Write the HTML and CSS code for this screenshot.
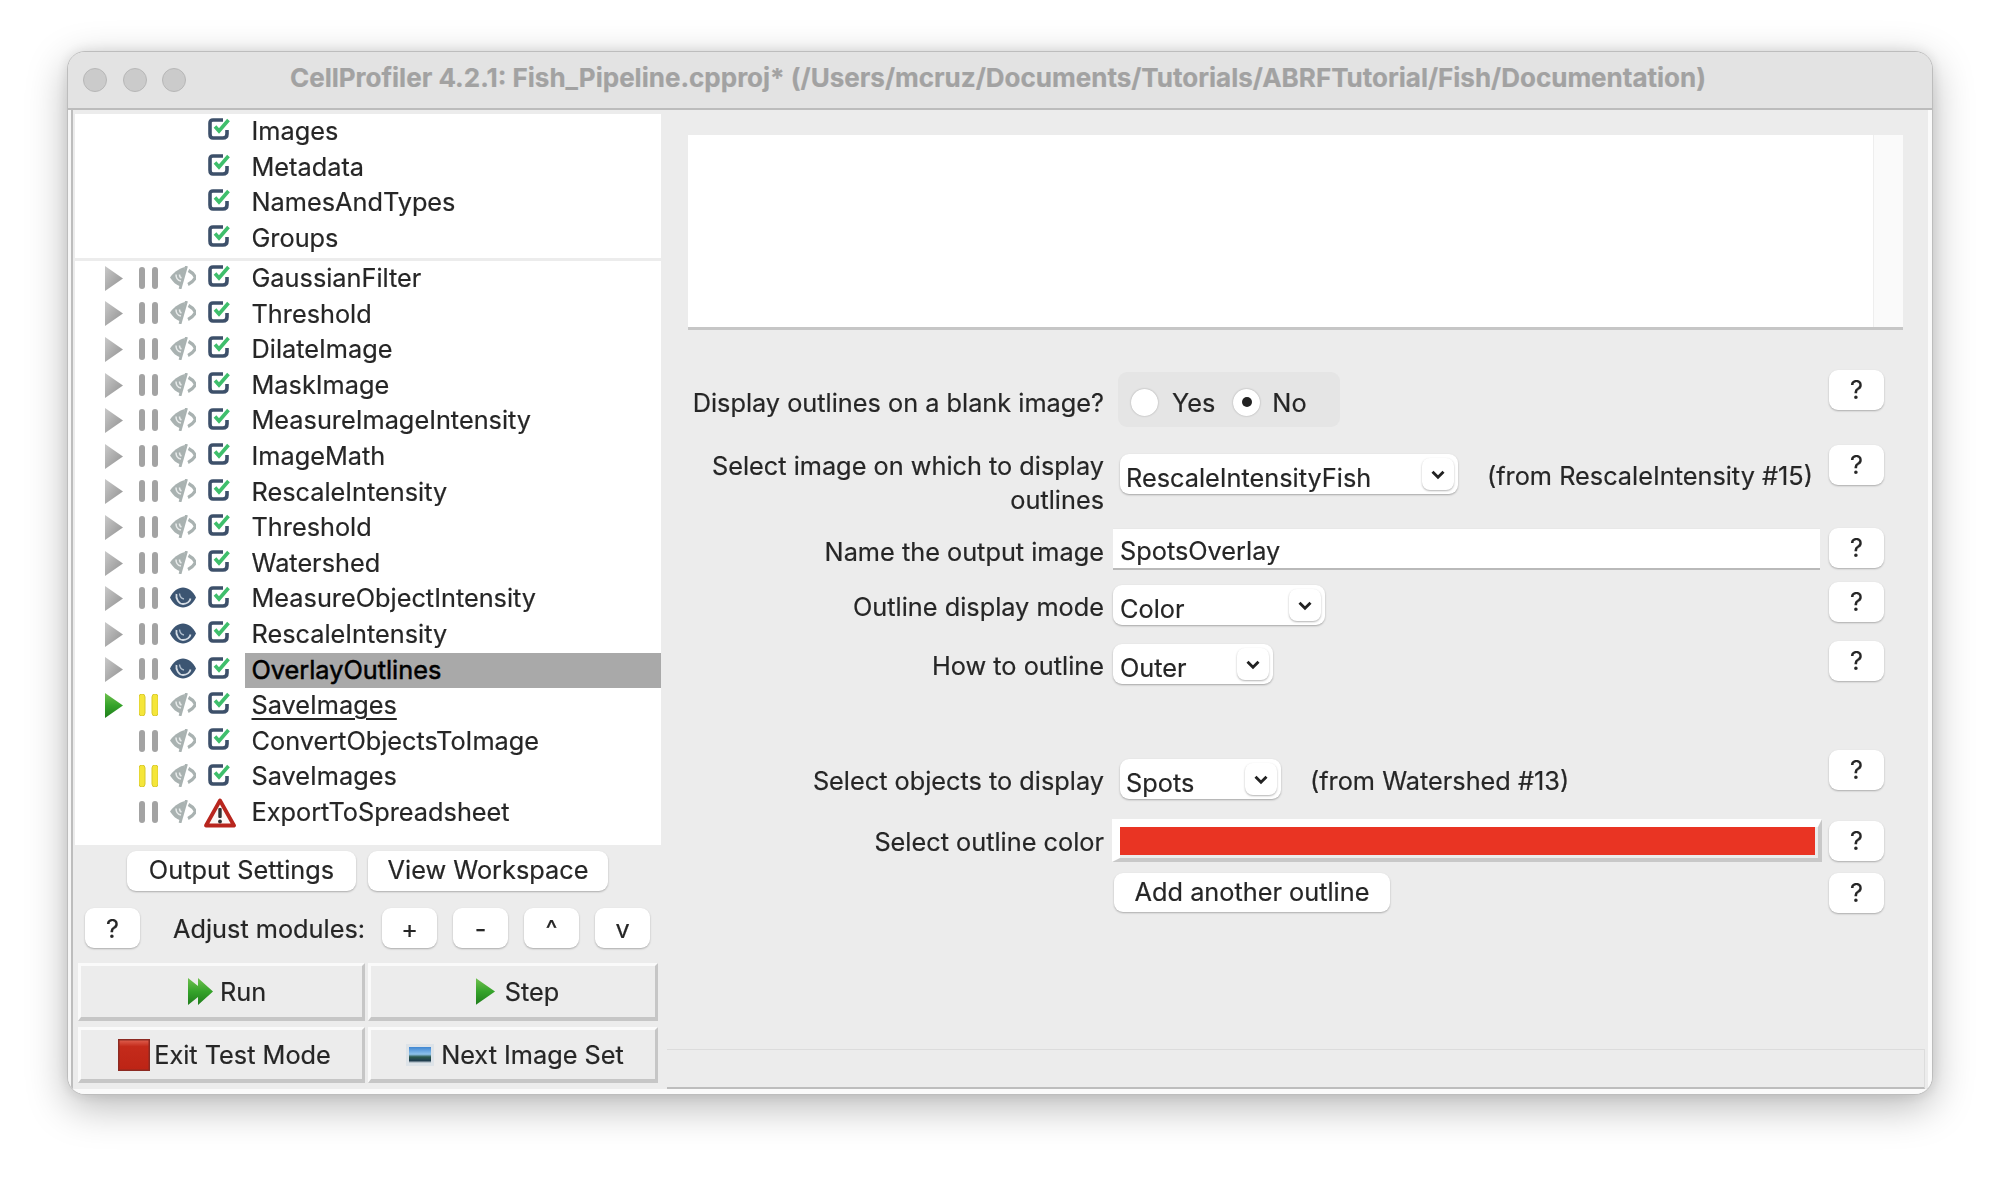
FILE: index.html
```html
<!doctype html>
<html lang="en">
<head>
	<meta charset="utf-8">
	<title>CellProfiler</title>
	<link rel="stylesheet" href="styles.css">
</head>
<body>
	<svg class="defs" width="0" height="0">
		<defs>
			<linearGradient id="gGrey" x1="0" y1="0" x2="1" y2="1"><stop offset="0" stop-color="#c9c9c9"/><stop offset="1" stop-color="#8f8f8f"/></linearGradient>
			<linearGradient id="gGreen" x1="0" y1="0" x2="0" y2="1"><stop offset="0" stop-color="#6fc04f"/><stop offset=".5" stop-color="#35a32a"/><stop offset="1" stop-color="#1f7d1c"/></linearGradient>
			<linearGradient id="gRed" x1="0" y1="0" x2="0" y2="1"><stop offset="0" stop-color="#e0604f"/><stop offset=".22" stop-color="#c42b1b"/><stop offset="1" stop-color="#bd2415"/></linearGradient>
			<linearGradient id="gPhoto" x1="0" y1="0" x2="0" y2="1"><stop offset="0" stop-color="#3f86d2"/><stop offset=".45" stop-color="#8ec2ea"/><stop offset=".62" stop-color="#2c5a4c"/><stop offset=".85" stop-color="#1f3d4e"/><stop offset="1" stop-color="#dfe7ee"/></linearGradient>
			<symbol id="i-arrow" viewBox="0 0 18 25"><path d="M0 0 18 12.5 0 25Z" fill="url(#gGrey)"/></symbol>
			<symbol id="i-arrow-go" viewBox="0 0 18 25"><path d="M0 0 18 12.5 0 25Z" fill="url(#gGreen)"/></symbol>
			<symbol id="i-pause" viewBox="0 0 19 22"><rect x="0" y="0" width="6" height="22" rx="3" fill="#a3a3a3"/><rect x="13" y="0" width="6" height="22" rx="3" fill="#a3a3a3"/></symbol>
			<symbol id="i-pause-on" viewBox="0 0 19 22"><rect x="0" y="0" width="6" height="22" rx="3" fill="#f5e63a" stroke="#d8c92c"/><rect x="13" y="0" width="6" height="22" rx="3" fill="#f5e63a" stroke="#d8c92c"/></symbol>
			<symbol id="i-eye" viewBox="0 0 26 23">
				<path d="M0 11.500C3 5 8 1.500 13 1.500S23 5 26 11.500C23 18 18 21.500 13 21.500S3 18 0 11.500Z" fill="#3c5572"/>
				<path d="M6.500 8c-1 5 2.500 10 6.500 10s7-2.500 7.500-5.500" fill="none" stroke="#d5dde5" stroke-width="1.800"/>
				<path d="M9.500 7.500c.300 3 2 5 4.500 5.500" fill="none" stroke="#aebccb" stroke-width="1.400"/>
			</symbol>
			<symbol id="i-eye-off" viewBox="0 0 26 23">
				<path d="M15 1C8 3 3 7 0 11.500 3 16 6 19 10.500 20.500Z" fill="#a9b2b1"/>
				<path d="M16.500 0 10 23" stroke="#a9b2b1" stroke-width="2.800"/>
				<path d="M18.500 4.500c3 1.500 5.500 4 7 7-1.500 3-4 5.500-7.500 7" fill="none" stroke="#a9b2b1" stroke-width="3.200"/>
				<path d="M6 8.500c0 3.500 2 6 5 6.500M9.500 8.500c0 2 .500 3 2 3.500" fill="none" stroke="#e8ebeb" stroke-width="1.500"/>
			</symbol>
			<symbol id="i-check" viewBox="0 0 23 22">
				<path d="M15 2H5Q2 2 2 5V16Q2 20 5 20H15Q19 20 19 16V12" fill="none" stroke="#3d506a" stroke-width="3.600"/>
				<path d="M7 8.500 11 13 20.500 2" fill="none" stroke="#3fbf6c" stroke-width="3.600"/>
			</symbol>
			<symbol id="i-warn" viewBox="0 0 32 30">
				<path d="M16 2.500 30 27.500H2Z" fill="#fbf7f5" stroke="#b8261e" stroke-width="3.800" stroke-linejoin="round"/>
				<rect x="14.300" y="10" width="3.400" height="10" rx="1" fill="#333"/>
				<circle cx="16" cy="23.500" r="1.900" fill="#333"/>
			</symbol>
			<symbol id="i-chev" viewBox="0 0 14 10"><path d="M2 2.500 7 7.500 12 2.500" fill="none" stroke="#222" stroke-width="2.600"/></symbol>
			<symbol id="i-run" viewBox="0 0 25 27"><path d="M0 0 10 8V0L25 13.500 10 27V19L0 27Z" fill="url(#gGreen)"/></symbol>
			<symbol id="i-stop" viewBox="0 0 32 32"><rect x=".75" y=".75" width="30.500" height="30.500" fill="url(#gRed)" stroke="#8c2a22" stroke-width="1.500"/></symbol>
			<symbol id="i-photo" viewBox="0 0 28 22"><rect width="28" height="22" fill="#dde3e8"/><rect x="3" y="3" width="22" height="16" fill="url(#gPhoto)"/></symbol>
		</defs>
	</svg>

	<div class="window">
		<div class="titlebar">
			<div class="lights"><span class="light"></span><span class="light"></span><span class="light"></span></div>
			<div class="title">CellProfiler 4.2.1: Fish_Pipeline.cpproj* (/Users/mcruz/Documents/Tutorials/ABRFTutorial/Fish/Documentation)</div>
		</div>

		<div class="main">
			<div class="left">
				<div class="tree">
					<div class="section section-input">
						<div class="row"><span></span><span></span><span></span><svg class="ico check"><use href="#i-check"/></svg><span class="name">Images</span></div>
						<div class="row"><span></span><span></span><span></span><svg class="ico check"><use href="#i-check"/></svg><span class="name">Metadata</span></div>
						<div class="row"><span></span><span></span><span></span><svg class="ico check"><use href="#i-check"/></svg><span class="name">NamesAndTypes</span></div>
						<div class="row"><span></span><span></span><span></span><svg class="ico check"><use href="#i-check"/></svg><span class="name">Groups</span></div>
					</div>
					<div class="section">
						<div class="row"><svg class="ico arrow"><use href="#i-arrow"/></svg><svg class="ico pause"><use href="#i-pause"/></svg><svg class="ico eye"><use href="#i-eye-off"/></svg><svg class="ico check"><use href="#i-check"/></svg><span class="name">GaussianFilter</span></div>
						<div class="row"><svg class="ico arrow"><use href="#i-arrow"/></svg><svg class="ico pause"><use href="#i-pause"/></svg><svg class="ico eye"><use href="#i-eye-off"/></svg><svg class="ico check"><use href="#i-check"/></svg><span class="name">Threshold</span></div>
						<div class="row"><svg class="ico arrow"><use href="#i-arrow"/></svg><svg class="ico pause"><use href="#i-pause"/></svg><svg class="ico eye"><use href="#i-eye-off"/></svg><svg class="ico check"><use href="#i-check"/></svg><span class="name">DilateImage</span></div>
						<div class="row"><svg class="ico arrow"><use href="#i-arrow"/></svg><svg class="ico pause"><use href="#i-pause"/></svg><svg class="ico eye"><use href="#i-eye-off"/></svg><svg class="ico check"><use href="#i-check"/></svg><span class="name">MaskImage</span></div>
						<div class="row"><svg class="ico arrow"><use href="#i-arrow"/></svg><svg class="ico pause"><use href="#i-pause"/></svg><svg class="ico eye"><use href="#i-eye-off"/></svg><svg class="ico check"><use href="#i-check"/></svg><span class="name">MeasureImageIntensity</span></div>
						<div class="row"><svg class="ico arrow"><use href="#i-arrow"/></svg><svg class="ico pause"><use href="#i-pause"/></svg><svg class="ico eye"><use href="#i-eye-off"/></svg><svg class="ico check"><use href="#i-check"/></svg><span class="name">ImageMath</span></div>
						<div class="row"><svg class="ico arrow"><use href="#i-arrow"/></svg><svg class="ico pause"><use href="#i-pause"/></svg><svg class="ico eye"><use href="#i-eye-off"/></svg><svg class="ico check"><use href="#i-check"/></svg><span class="name">RescaleIntensity</span></div>
						<div class="row"><svg class="ico arrow"><use href="#i-arrow"/></svg><svg class="ico pause"><use href="#i-pause"/></svg><svg class="ico eye"><use href="#i-eye-off"/></svg><svg class="ico check"><use href="#i-check"/></svg><span class="name">Threshold</span></div>
						<div class="row"><svg class="ico arrow"><use href="#i-arrow"/></svg><svg class="ico pause"><use href="#i-pause"/></svg><svg class="ico eye"><use href="#i-eye-off"/></svg><svg class="ico check"><use href="#i-check"/></svg><span class="name">Watershed</span></div>
						<div class="row"><svg class="ico arrow"><use href="#i-arrow"/></svg><svg class="ico pause"><use href="#i-pause"/></svg><svg class="ico eye"><use href="#i-eye"/></svg><svg class="ico check"><use href="#i-check"/></svg><span class="name">MeasureObjectIntensity</span></div>
						<div class="row"><svg class="ico arrow"><use href="#i-arrow"/></svg><svg class="ico pause"><use href="#i-pause"/></svg><svg class="ico eye"><use href="#i-eye"/></svg><svg class="ico check"><use href="#i-check"/></svg><span class="name">RescaleIntensity</span></div>
						<div class="row"><svg class="ico arrow"><use href="#i-arrow"/></svg><svg class="ico pause"><use href="#i-pause"/></svg><svg class="ico eye"><use href="#i-eye"/></svg><svg class="ico check"><use href="#i-check"/></svg><span class="name selected">OverlayOutlines</span></div>
						<div class="row"><svg class="ico arrow"><use href="#i-arrow-go"/></svg><svg class="ico pause"><use href="#i-pause-on"/></svg><svg class="ico eye"><use href="#i-eye-off"/></svg><svg class="ico check"><use href="#i-check"/></svg><span class="name current">SaveImages</span></div>
						<div class="row"><span></span><svg class="ico pause"><use href="#i-pause"/></svg><svg class="ico eye"><use href="#i-eye-off"/></svg><svg class="ico check"><use href="#i-check"/></svg><span class="name">ConvertObjectsToImage</span></div>
						<div class="row"><span></span><svg class="ico pause"><use href="#i-pause-on"/></svg><svg class="ico eye"><use href="#i-eye-off"/></svg><svg class="ico check"><use href="#i-check"/></svg><span class="name">SaveImages</span></div>
						<div class="row"><span></span><svg class="ico pause"><use href="#i-pause"/></svg><svg class="ico eye"><use href="#i-eye-off"/></svg><svg class="ico warn"><use href="#i-warn"/></svg><span class="name">ExportToSpreadsheet</span></div>
					</div>
				</div>

				<div class="output-row">
					<button class="btn btn-output">Output Settings</button>
					<button class="btn btn-workspace">View Workspace</button>
				</div>
				<div class="adjust-row">
					<button class="btn btn-small">?</button>
					<span class="adjust-label">Adjust modules:</span>
					<div class="adjust-btns">
						<button class="btn btn-small">+</button>
						<button class="btn btn-small">-</button>
						<button class="btn btn-small">^</button>
						<button class="btn btn-small">v</button>
					</div>
				</div>
				<div class="run-grid">
					<button class="bevel bevel-run"><svg class="ico-run"><use href="#i-run"/></svg>Run</button>
					<button class="bevel bevel-step"><svg class="ico-step"><use href="#i-arrow-go"/></svg>Step</button>
					<button class="bevel bevel-low bevel-exit"><svg class="ico-stop"><use href="#i-stop"/></svg>Exit Test Mode</button>
					<button class="bevel bevel-low bevel-next"><svg class="ico-photo"><use href="#i-photo"/></svg>Next Image Set</button>
				</div>
			</div>

			<div class="right">
				<div class="log"><div class="log-body"></div><div class="log-scroll"></div></div>

				<div class="settings">
					<div class="setting">
						<div class="lbl lbl-r1">Display outlines on a blank image?</div>
						<div class="ctl ctl-r1">
							<div class="radios">
								<span class="radio"></span><span class="radio-text">Yes</span>
								<span class="radio radio-on"></span><span class="radio-text">No</span>
							</div>
						</div>
						<button class="btn help">?</button>
					</div>
					<div class="setting">
						<div class="lbl lbl-r2">Select image on which to display<br>outlines</div>
						<div class="ctl ctl-inset ctl-r2">
							<div class="dd dd-image"><span>RescaleIntensityFish</span><span class="chev"><svg><use href="#i-chev"/></svg></span></div>
							<span class="note note-image">(from RescaleIntensity #15)</span>
						</div>
						<button class="btn help">?</button>
					</div>
					<div class="setting">
						<div class="lbl lbl-r3">Name the output image</div>
						<div class="ctl"><div class="field">SpotsOverlay</div></div>
						<button class="btn help">?</button>
					</div>
					<div class="setting">
						<div class="lbl lbl-r4">Outline display mode</div>
						<div class="ctl ctl-r4"><div class="dd dd-mode dd-flush"><span>Color</span><span class="chev"><svg><use href="#i-chev"/></svg></span></div></div>
						<button class="btn help">?</button>
					</div>
					<div class="setting">
						<div class="lbl lbl-r5">How to outline</div>
						<div class="ctl ctl-r4"><div class="dd dd-how dd-flush"><span>Outer</span><span class="chev"><svg><use href="#i-chev"/></svg></span></div></div>
						<button class="btn help">?</button>
					</div>
					<div class="setting">
						<div class="lbl lbl-r6">Select objects to display</div>
						<div class="ctl ctl-inset ctl-r6">
							<div class="dd dd-obj"><span>Spots</span><span class="chev"><svg><use href="#i-chev"/></svg></span></div>
							<span class="note note-obj">(from Watershed #13)</span>
						</div>
						<button class="btn help">?</button>
					</div>
					<div class="setting">
						<div class="lbl lbl-r7">Select outline color</div>
						<div class="ctl"><div class="swatch"><div class="swatch-fill"></div></div></div>
						<button class="btn help help-r7">?</button>
					</div>
					<div class="setting">
						<div></div>
						<div class="ctl"><button class="btn btn-add">Add another outline</button></div>
						<button class="btn help">?</button>
					</div>
				</div>

				<div class="status"></div>
			</div>
		</div>
	</div>
</body>
</html>
```

FILE: styles.css
```css
html, body { margin: 0; height: 100%; background: #fff; overflow: hidden; }
body { padding: 51px 0 0 67px; box-sizing: border-box; font-family: Inter, "Liberation Sans", sans-serif; font-size: 25.300px; color: #262626; -webkit-text-stroke: .2px; }
.defs { position: absolute; }
button { font: inherit; color: inherit; border: 0; padding: 0; margin: 0; }

/* window frame */
.window { width: 1866px; height: 1044px; box-sizing: border-box; border: 1px solid #bdbdbd; border-radius: 18px; background: #ececec; box-shadow: 0 12px 40px rgba(0,0,0,.28), 0 0 14px rgba(0,0,0,.1); overflow: hidden; display: flex; flex-direction: column; filter: blur(.35px); }
.titlebar { height: 56px; background: #e3e3e3; display: grid; grid-template-columns: 1fr auto 1fr; align-items: center; flex: none; }
.lights { display: flex; gap: 15.500px; padding-left: 15px; }
.light { width: 24px; height: 24px; box-sizing: border-box; border-radius: 50%; background: #cbcbcb; border: 1px solid #b7b7b7; }
.title { grid-column: 2; font-weight: 700; font-size: 26px; color: #a2a2a2; white-space: nowrap; margin: -5px 4px 0 0; }

.main { flex: 1; display: flex; min-height: 0; border-top: 2px solid #bcbcbc; }

/* left column */
.left { width: 597px; flex: none; box-sizing: border-box; padding-left: 3px; background: linear-gradient(90deg, #f6f6f6 0 3px, #bdbdbd 3px 5px, #ececec 5px); box-shadow: inset 0 -5px 0 #fafafa; }
.tree { margin-left: 4px; width: 586px; height: 731px; margin-top: 4px; background: #fff; }
.section-input { height: 143px; padding-bottom: 1px; border-bottom: 3px solid #ececec; }
.row { height: 35.600px; display: grid; grid-template-columns: 34px 31px 37px 38px 1fr; padding-left: 30px; align-items: center; }
.name { height: 35.600px; line-height: 34px; padding-left: 6.500px; white-space: nowrap; }
.selected { background: #a9a9a9; color: #000; -webkit-text-stroke: .5px; }
.current { text-decoration: underline; text-underline-offset: 4px; text-decoration-thickness: 2px; }
.ico { display: block; }
.arrow { width: 18px; height: 25px; margin-top: -1px; }
.pause { width: 19px; height: 22px; margin-top: -2px; }
.eye { width: 26px; height: 23px; margin-top: -3px; }
.check { width: 23px; height: 22px; margin: -5px 0 0 1px; }
.warn { width: 32px; height: 30px; margin: 0 0 0 -3px; }

.btn { background: #fff; border-radius: 9px; box-shadow: 0 1px 2px rgba(0,0,0,.28); height: 40px; text-align: center; flex: none; }
.output-row { display: flex; gap: 12px; padding-left: 56px; margin-top: 6px; }
.btn-output { width: 229px; padding-bottom: 3px; }
.btn-workspace { width: 240px; padding-bottom: 3px; }
.adjust-row { display: flex; align-items: center; padding-left: 14px; margin-top: 17px; }
.btn-small { width: 55px; }
.adjust-label { width: 208px; margin-left: 33px; white-space: nowrap; }
.adjust-btns { display: flex; gap: 16px; margin-left: 1px; }
.run-grid { display: grid; grid-template-columns: 287px 290px; column-gap: 3px; row-gap: 6px; padding-left: 7px; margin-top: 15px; }
.bevel { height: 58px; box-sizing: border-box; background: #ececec; border-style: solid; border-width: 3px 3px 4px 3px; border-color: #fafafa #c6c6c6 #c6c6c6 #fafafa; display: flex; align-items: center; justify-content: center; }
.bevel-low { height: 56px; }
.bevel-run { padding-left: 11px; }
.bevel-step { padding-left: 9px; }
.bevel-exit { padding-left: 6px; }
.bevel-next { padding-left: 4px; }
.ico-run { width: 25px; height: 27px; margin-right: 7px; }
.ico-step { width: 19px; height: 27px; margin-right: 10px; }
.ico-stop { width: 32px; height: 32px; margin-right: 4px; }
.ico-photo { width: 28px; height: 22px; margin-right: 7px; }

/* right column */
.right { flex: 1; min-width: 0; display: flex; flex-direction: column; box-sizing: border-box; border-right: 4px solid #fafafa; border-bottom: 5px solid #fafafa; }
.log { height: 195px; width: 1215px; margin: 25px 0 0 23px; display: flex; background: #fff; border-bottom: 3px solid #c6c6c6; box-sizing: border-box; flex: none; }
.log-body { flex: 1; }
.log-scroll { width: 29px; background: #fafafa; border-left: 1px solid #eeeeee; }

.settings { margin-top: 40px; flex: 1; display: grid; grid-template-rows: 75px 83px 54px 59px 109px 69px 54px 40px; align-content: start; }
.setting { display: grid; grid-template-columns: 448px 716px 55px; align-items: start; }
.lbl { text-align: right; padding-right: 9px; line-height: 34px; white-space: nowrap; }
.lbl-r1 { margin-top: 16px; }
.lbl-r2 { margin-top: 4px; }
.lbl-r3 { margin-top: 7px; }
.lbl-r4 { margin-top: 8px; }
.lbl-r5 { margin-top: 8px; }
.lbl-r6 { margin-top: 14px; }
.lbl-r7 { margin-top: 6px; }
.help { width: 55px; padding-bottom: 2px; }
.help-r7 { margin-top: 2px; }
.ctl { display: flex; align-items: flex-start; }
.ctl-r1 { margin: 2px 0 0 5px; }
.ctl-r2 { margin-top: 9px; }
.ctl-r4 { margin-top: 3px; }
.ctl-r6 { margin-top: 9px; }
.ctl-inset { padding-left: 7px; }

.radios { width: 222px; height: 55px; background: #e5e5e5; border-radius: 9px; display: flex; align-items: center; padding: 5px 0 0 13px; box-sizing: border-box; }
.radio { width: 27px; height: 27px; box-sizing: border-box; border-radius: 50%; background: #fff; box-shadow: 0 0 2px rgba(0,0,0,.3); display: flex; align-items: center; justify-content: center; }
.radio-on::after { content: ""; width: 10px; height: 10px; border-radius: 50%; background: #222; }
.radio-text { margin: 2px 18px 0 14px; line-height: 34px; }
.radio-text:last-child { margin: 2px 0 0 12px; }

.dd { height: 40px; box-sizing: border-box; background: #fff; border-radius: 9px; box-shadow: 0 1px 2px rgba(0,0,0,.3); display: flex; justify-content: space-between; align-items: center; padding: 6px 4px 0 6px; white-space: nowrap; }
.dd-flush { padding-left: 7px; }
.dd-image { width: 338px; }
.dd-mode { width: 212px; }
.dd-how { width: 160px; }
.dd-obj { width: 161px; }
.chev { width: 32px; height: 32px; margin-top: -6px; border-radius: 8px; background: #fff; box-shadow: 0 1px 2px rgba(0,0,0,.3); display: flex; align-items: center; justify-content: center; }
.chev svg { width: 16px; height: 11px; }
.note { line-height: 34px; white-space: nowrap; }
.note-image { margin: 5px 0 0 29px; }
.note-obj { margin: 5px 0 0 29px; }

.field { width: 707px; height: 42px; box-sizing: border-box; background: #fff; border-bottom: 2px solid #b9b9b9; border-top: 1px solid #e8e8e8; padding-left: 7px; line-height: 43px; }
.swatch { width: 710px; height: 43px; box-sizing: border-box; margin-left: -1px; background: #ececec; border-style: solid; border-width: 8px 4px 4px 8px; border-color: #fff #c8c8c8 #c8c8c8 #fff; padding: 0 3px 3px 0; }
.swatch-fill { height: 100%; background: #e93423; }
.btn-add { width: 276px; margin-left: 1px; height: 39px; padding-bottom: 2px; }

.status { height: 40px; flex: none; margin: 0 0 0 2px; width: 1258px; box-sizing: border-box; border: 1px solid #dcdcdc; border-left: 0; border-bottom: 2px solid #bdbdbd; }
```
